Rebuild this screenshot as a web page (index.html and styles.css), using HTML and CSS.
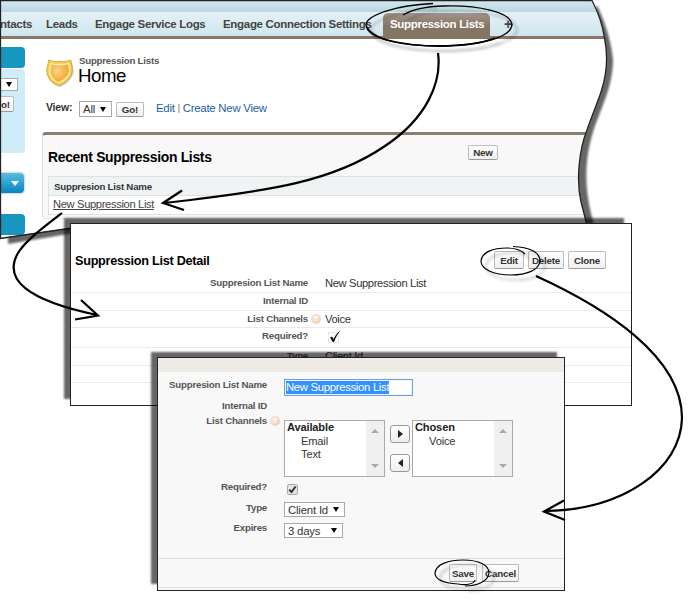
FILE: index.html
```html
<!DOCTYPE html>
<html lang="en">
<head>
<meta charset="utf-8">
<title>Suppression Lists</title>
<link rel="stylesheet" href="styles.css">
</head>
<body>
<main class="stage">
  <svg class="torn-shadow" width="690" height="260" viewBox="0 0 690 260" aria-hidden="true">
    <path d="M8 20H592L597 5C603 18 611 38 613 60C613 86 601 108 593 132C585 158 583 188 594 224L75 233L8 244Z"/>
  </svg>

  <section class="home">
    <div class="strip"></div>
    <nav class="tabs">
      <span class="tab t-contacts">ntacts</span>
      <span class="tab t-leads">Leads</span>
      <span class="tab t-logs">Engage Service Logs</span>
      <span class="tab t-conn">Engage Connection Settings</span>
      <span class="tab active">Suppression Lists</span>
      <span class="tab plus">+</span>
    </nav>
    <div class="columns">
      <aside class="side">
        <div class="side-head"></div>
        <div class="side-box">
          <div class="side-select"><i class="caret"></i></div>
          <div class="btn side-go">o!</div>
        </div>
        <div class="create"><i class="caret white"></i></div>
        <div class="side-head last"></div>
      </aside>
      <div class="content">
        <header class="title">
          <svg width="28" height="30" viewBox="0 0 28 30" aria-hidden="true">
            <defs><radialGradient id="gold" cx=".4" cy=".4" r=".6"><stop offset="0" stop-color="#ffd58a"/><stop offset="1" stop-color="#eda32f"/></radialGradient></defs>
            <path d="M3 3C8 5 11 4 14 1.500C18 4 22 4 26 2C26 6 28 8 27.500 14C26 20 21 25 14 28C7 26 2 21 1.500 15C1 10 3 7 3 3Z" fill="#a9a08c" opacity=".55"/>
            <path d="M2.500 1C7 2.500 10 3 13 2.500C17 3 21 2.500 24.500 1C25 5 27 8 26 13C24.500 19 20 24 13 26.500C7 25 2 20 1 14C0 9 2.500 6 2.500 1Z" fill="#f5cf58" stroke="#cf9a35" stroke-width=".8"/>
            <path d="M5 4.500C8 5.500 11 6 13.300 5.500C17 6 20 5.500 22.300 4.500C23 8 24 10 23.500 13.500C22 18 18 21.500 13.200 23.500C8 22 4.500 18 3.800 13.500C3 10 5 8 5 4.500Z" fill="url(#gold)" stroke="#fff3a0" stroke-width="1.300"/>
          </svg>
          <div class="title-text">
            <div class="small">Suppression Lists</div>
            <h1>Home</h1>
          </div>
        </header>
        <div class="view">
          <b>View:</b>
          <span class="select all">All<i class="caret"></i></span>
          <span class="btn go">Go!</span>
          <span class="links"><a>Edit</a><em>|</em><a>Create New View</a></span>
        </div>
        <div class="recent">
          <div class="recent-head"><h2>Recent Suppression Lists</h2><span class="btn new">New</span></div>
          <div class="table">
            <div class="th">Suppresion List Name</div>
            <div class="td"><a>New Suppression List</a></div>
          </div>
        </div>
      </div>
    </div>
  </section>
  <svg class="torn-edge" width="690" height="260" viewBox="0 0 690 260" aria-hidden="true">
    <path d="M.5 238V.5H592C596 8 602 22 604.500 38C608 55 607 74 601 92C597 104 591 118 587 130C579 150 576 180 581 202L587 225M0 238.500L76 227.500"/>
  </svg>

  <section class="detail">
    <header><h3>Suppression List Detail</h3>
      <div class="actions"><span class="btn">Edit</span><span class="btn">Delete</span><span class="btn">Clone</span></div>
    </header>
    <div class="row r1"><b>Suppresion List Name</b><span>New Suppression List</span></div>
    <div class="row"><b>Internal ID</b></div>
    <div class="row"><b>List Channels</b><i class="help">?</i><span class="after">Voice</span></div>
    <div class="row tall"><b>Required?</b>
      <svg class="tick" width="14" height="13" viewBox="0 0 14 13" aria-hidden="true"><path d="M.5 2.500h10v10H.5z" fill="none" stroke="#ccc" stroke-dasharray="1 1"/><path d="M2 7.500L4 6.500L5.500 9C7.500 5 9.500 2.500 12.500 .5C10 3.500 7.500 7.500 6 12H4.800Z" fill="#111"/></svg>
    </div>
    <div class="row type"><b>Type</b><span>Client Id</span></div>
    <div class="row"></div>
  </section>

  <section class="edit">
    <div class="bar"></div>
    <div class="form">
      <div class="line l-name"><label>Suppresion List Name</label><div class="input"><mark>New Suppression List</mark></div></div>
      <div class="line l-id"><label>Internal ID</label></div>
      <div class="line l-chan"><label>List Channels</label><i class="help">?</i>
        <div class="list"><div class="items"><b>Available</b><span>Email</span><span>Text</span></div><div class="scroll"><i class="up"></i><i class="down"></i></div></div>
        <div class="move"><span><i class="right"></i></span><span><i class="left"></i></span></div>
        <div class="list"><div class="items"><b>Chosen</b><span>Voice</span></div><div class="scroll"><i class="up"></i><i class="down"></i></div></div>
      </div>
      <div class="line l-req"><label>Required?</label>
        <div class="check"><svg width="9" height="9" viewBox="0 0 9 9" aria-hidden="true"><path d="M1.200 4.800L3.500 7L7.600 1.500" fill="none" stroke="#333" stroke-width="2"/></svg></div></div>
      <div class="line l-type"><label>Type</label><span class="select s1">Client Id<i class="caret"></i></span></div>
      <div class="line l-exp"><label>Expires</label><span class="select s2">3 days<i class="caret"></i></span></div>
    </div>
    <footer><span class="btn">Save</span><span class="btn">Cancel</span></footer>
  </section>

  <svg class="marks" width="690" height="600" viewBox="0 0 690 600" aria-hidden="true">
    <defs><filter id="soft" x="-20%" y="-20%" width="150%" height="160%"><feDropShadow dx="5" dy="5" stdDeviation="1.500" flood-color="#000" flood-opacity=".3"/></filter></defs>
    <g filter="url(#soft)">
      <path d="M433 3.500C397 5 366 15 366 25C367 38 398 46 440 46C484 45 512 37 512 24C510 12 478 5 444 6C425 6.500 411 10 403 15" stroke-width="1.400"/>
      <path d="M367 27C372 39 402 46 440 46C463 46 483 43 495 38" stroke-width="1.800"/>
      <path d="M513 246.500C529 247 540 252 540 261C539 270 527 275 511 275C493 275 481 269 481 261C482 252 493 248 507 248C515 248 521 250 525 254" stroke-width="1.200"/>
      <path d="M475 580C474 585 464 585 458 584C443 583 435 579 435 573C436 564 449 560 463 560C479 560 489 565 489 573C488 581 478 586 465 586" stroke-width="1.200"/>
    </g>
    <g stroke-width="2.200">
      <path d="M438 53C442 82 427 118 385 146C334 181 272 191 164 203M182 190.500L163 203L184 210"/>
      <path d="M62 213C45 226 26 240 18 253C3 279 26 300 97 315M81 300L98 315.500L75 319.500"/>
      <path d="M536 276C604 307 682 356 682 418C681 470 622 510 545 511M564 500.500L544 511.500L565 520"/>
    </g>
  </svg>
</main>
</body>
</html>
```
FILE: styles.css
```css
* { box-sizing: border-box; }
body { margin: 0; background: #fff; font-family: "Liberation Sans", Arial, sans-serif; font-size: 11.2px; letter-spacing: -.36px; color: #333; }
h1, h2, h3 { margin: 0; color: #000; }
i, em { font-style: normal; }
.stage { position: relative; width: 690px; height: 600px; overflow: hidden; white-space: nowrap; }
.torn-shadow, .torn-edge, .marks { position: absolute; left: 0; top: 0; }
.torn-shadow path { fill: #666; filter: blur(1px); }
.torn-edge path { fill: none; stroke: #222; stroke-width: 1.3; }
.marks path { fill: none; stroke: #000; stroke-linecap: butt; }

.btn { display: flex; align-items: center; justify-content: center; border: 1px solid #bbb; border-bottom-color: #999; border-radius: 2px; background: linear-gradient(#fff, #f0f0f0); color: #333; font-weight: bold; font-size: 9.8px; letter-spacing: -.2px; }
.select { display: flex; align-items: center; justify-content: space-between; border: 1px solid #aaa; background: #fff; font-size: 11.4px; letter-spacing: -.2px; }
.caret { border: 3px solid transparent; border-top: 5px solid #000; border-bottom: 0; }
.caret.white { border-top-color: #fff; border-width: 5px 4px 0; }
.help { width: 10px; height: 10px; border-radius: 50%; background: radial-gradient(circle at 35% 35%, #fbeadb, #e9c7a5); color: #fff; font: bold 8px/10px "Liberation Sans", sans-serif; text-align: center; }

.home { position: absolute; left: 0; top: 0; width: 610px; height: 240px; background: #fff; clip-path: path("M0 0H592C596 8 602 22 604.5 38C608 55 607 74 601 92C597 104 591 118 587 130C579 150 576 180 581 202L587 227H76L0 238Z"); }
.strip { height: 12px; background: linear-gradient(#d6e8ee, #b9d8e1); }
.tabs { display: flex; height: 27px; background: linear-gradient(#e4f1f6, #cfe6ee); border-bottom: 3px solid #8b7769; font-weight: bold; font-size: 11.5px; letter-spacing: -.31px; line-height: 24px; color: #444; }
.t-contacts { width: 46px; }
.t-leads { width: 49px; }
.t-logs { width: 128px; }
.t-conn { width: 160px; }
.tab.active { width: 107px; height: 26px; margin-top: 1px; padding-left: 7px; line-height: 22px; color: #fff; border-radius: 5px 5px 0 0; background: linear-gradient(#a1968b, #857565 50%); }
.plus { padding-left: 14px; font-size: 14px; }
.columns { display: flex; }
.side { width: 42px; padding-top: 8px; }
.side-head { width: 25px; height: 21px; border-radius: 0 4px 4px 0; background: #1796bf; }
.side-box { width: 25px; height: 84px; margin-top: 1px; padding-top: 9px; border-radius: 0 4px 4px 0; background: #ceedf8; }
.side-select { display: flex; align-items: center; justify-content: flex-end; width: 18px; height: 13px; padding-right: 5px; border: 1px solid #aaa; background: #fff; }
.side-go { width: 14px; height: 16px; margin-top: 5px; justify-content: flex-start; }
.create { display: flex; align-items: center; justify-content: flex-end; width: 25px; height: 22px; margin-top: 19px; padding-right: 5px; border: 1px solid #ddd; border-left: 0; border-radius: 0 5px 5px 0; background: linear-gradient(#58bce2, #0787bf); box-shadow: 0 0 2px #ccc; }
.side-head.last { margin-top: 20px; }
.content { width: 568px; }
.title { display: flex; height: 62px; padding: 20px 0 0 4px; }
.title-text { margin-left: 4px; margin-top: -4px; }
.small { font-weight: bold; font-size: 9.7px; letter-spacing: -.23px; line-height: 12px; padding-left: 1px; color: #555; }
h1 { font-size: 18.7px; letter-spacing: -.5px; font-weight: normal; line-height: 18px; }
.view { display: flex; align-items: flex-start; height: 31px; padding-left: 4px; }
.view b { width: 33px; line-height: 13px; font-size: 10.5px; letter-spacing: -.2px; }
.all { width: 33px; height: 16px; padding: 0 5px 0 3px; }
.go { width: 28px; height: 15px; margin: 1px 0 0 4px; }
.links { display: flex; gap: 3px; margin-left: 12px; line-height: 15px; font-size: 11.4px; letter-spacing: -.25px; color: #1b5f9c; }
.links em { color: #666; font-size: 9px; }
.recent { height: 87px; padding: 0 0 0 5px; border-top: 3px solid #8b7e6e; border-left: 1px solid #ddd; border-bottom: 1px solid #e5e5e5; border-radius: 4px; background: #f8f8f8; }
.recent-head { display: flex; height: 41px; padding-top: 9px; }
h2 { width: 420px; font-size: 13.9px; letter-spacing: -.29px; line-height: 26px; }
.new { width: 30px; height: 15px; margin-top: 1px; }
.table { height: 39px; border: 1px solid #dde2e2; background: #fff; }
.th { height: 19px; padding-left: 5px; background: #eff3f3; border-bottom: 1px solid #dde2e2; font-size: 9.7px; letter-spacing: -.22px; font-weight: bold; line-height: 19px; }
.td { padding-left: 4px; line-height: 17px; color: #444; text-decoration: underline; }

.detail { position: absolute; left: 70px; top: 223px; width: 562px; height: 183px; border: 1px solid #222; background: #fff; box-shadow: -7px -6px 2px -1px rgba(0,0,0,.6); clip-path: inset(-10px 0 0 -10px); }
.detail header { display: flex; justify-content: space-between; height: 51px; padding: 27px 25px 0 4px; }
h3 { font-size: 12.7px; letter-spacing: -.28px; line-height: 20px; }
.actions { display: flex; gap: 4px; }
.actions .btn { width: 36px; height: 18px; }
.actions .btn:first-child { width: 30px; }
.actions .btn:last-child { width: 38px; }
.row { display: flex; height: 17.7px; border-bottom: 1px solid #eaeaea; line-height: 15px; }
.row.r1 { height: 18px; line-height: 16px; }
.row b { width: 237px; text-align: right; font-size: 9.7px; letter-spacing: -.22px; color: #555; }
.row span { margin-left: 17px; color: #333; }
.row .help { margin: 3px 0 0 3px; }
.row .after { margin-left: 4px; line-height: 16px; }
.row.tall { height: 19.5px; }
.row.tall b { line-height: 16px; }
.tick { margin: 2px 0 0 20px; }
.row.type { line-height: 16px; }

.edit { position: absolute; left: 157px; top: 357px; width: 408px; height: 234px; border: 1px solid #222; background: #f8f8f8; box-shadow: -7px -6px 2px -1px rgba(0,0,0,.6); }
.bar { height: 14px; background: #eeebe6; }
.form { height: 186px; padding-top: 7px; }
.line { display: flex; }
.line label { width: 109px; font-size: 9.7px; letter-spacing: -.22px; font-weight: bold; text-align: right; line-height: 12px; color: #555; }
.l-name { height: 21px; }
.input { width: 129px; height: 17px; margin-left: 17px; border: 1px solid #6d9ddd; background: #fff; padding: 1px; box-shadow: inset 0 0 1px #6d9ddd; line-height: 13px; font-size: 11.3px; letter-spacing: -.3px; }
mark { display: inline-block; height: 13px; background: #3390ff; color: #fff; }
.l-id { height: 15px; }
.l-chan { height: 66px; }
.l-chan .help { margin: 1px 4px 0 3px; }
.list { display: flex; width: 101px; height: 57px; margin-top: 5px; border: 1px solid #aaa; background: #fff; }
.items { display: flex; flex-direction: column; width: 81px; padding-left: 2px; line-height: 13.5px; font-size: 11.1px; letter-spacing: -.15px; }
.items span { padding-left: 14px; }
.items b { color: #222; }
.scroll { display: flex; flex-direction: column; justify-content: space-between; align-items: center; flex: 1; padding: 8px 0; background: #f0f0f0; }
.scroll i { border: 4px solid transparent; }
.scroll .up { border-top: 0; border-bottom-color: #aaa; }
.scroll .down { border-bottom: 0; border-top-color: #aaa; }
.move { display: flex; flex-direction: column; gap: 11px; margin: 10px 2px 0 5px; }
.move span { display: flex; align-items: center; justify-content: center; width: 20px; height: 18px; border: 1px solid #999; border-radius: 3px; background: linear-gradient(#fff, #eee); }
.right { border: 4px solid transparent; border-left: 5px solid #222; border-right: 0; }
.left { border: 4px solid transparent; border-right: 5px solid #222; border-left: 0; }
.l-req { height: 21px; }
.check { display: flex; align-items: center; justify-content: center; width: 11px; height: 11px; margin: 3px 0 0 20px; border: 1px solid #aaa; border-radius: 2px; background: #e4e4e4; }
.l-type { height: 20px; }
.l-type .select, .l-exp .select { width: 61px; height: 15px; margin-left: 17px; padding: 0 5px 0 3px; }
.l-exp .select { width: 59px; margin-top: 1px; }
footer { display: flex; justify-content: flex-end; gap: 5px; height: 30px; padding: 5px 45px 0 0; border-top: 1px solid #ddd; border-bottom: 1px solid #e2e2e2; }
footer .btn { width: 28px; height: 18px; }
footer .btn:last-child { width: 37px; }
```
